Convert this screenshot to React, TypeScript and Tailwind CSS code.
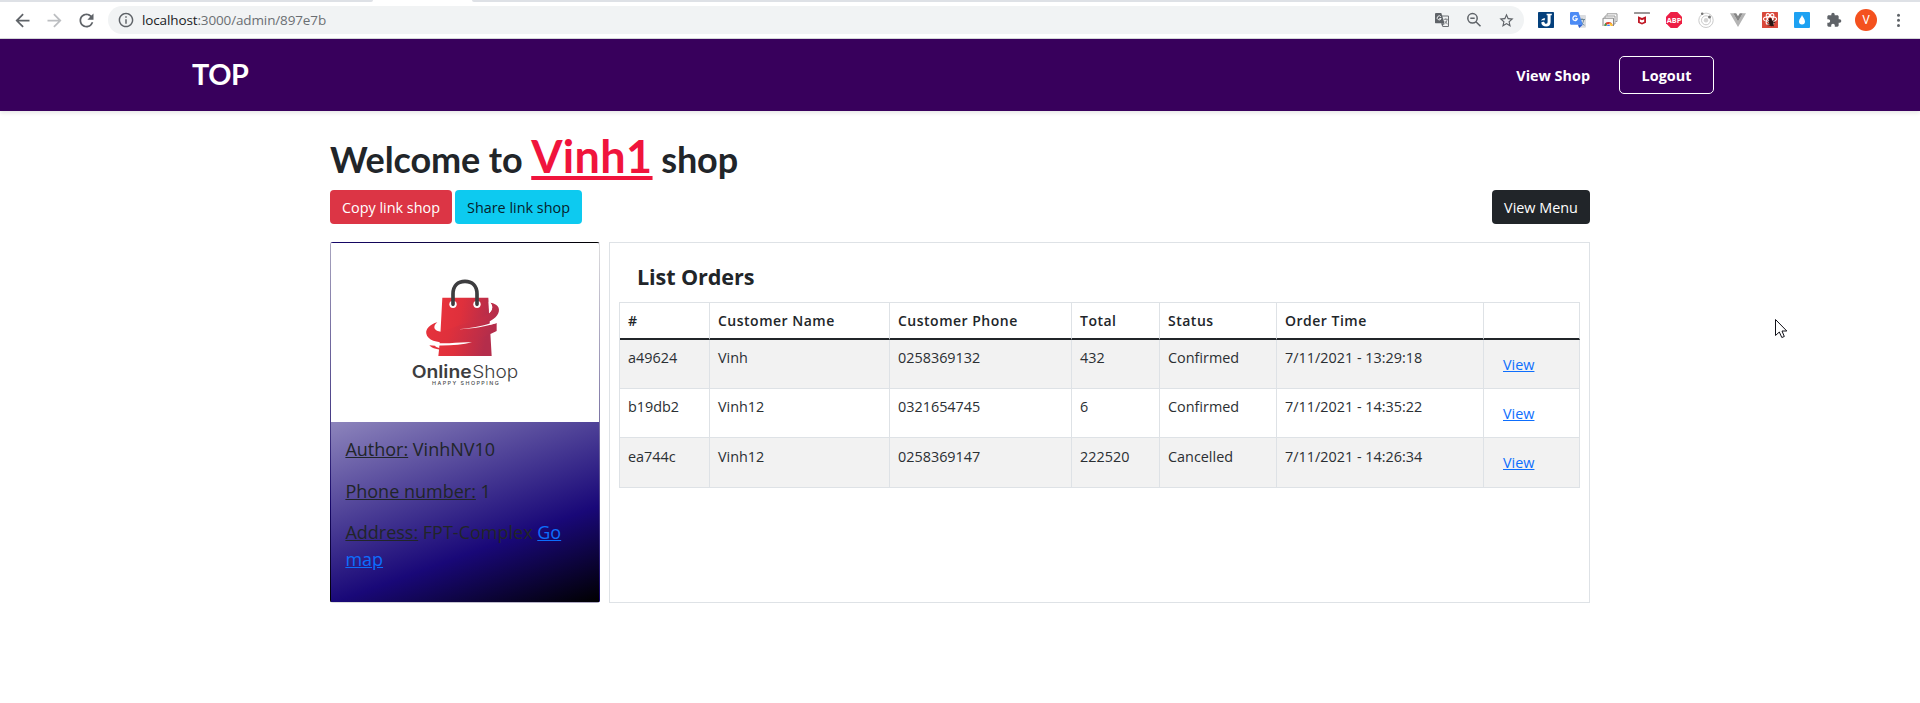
import React from 'react';

type Order = {
  id: string;
  name: string;
  phone: string;
  total: string;
  status: string;
  time: string;
};

const orders: Order[] = [
  { id: 'a49624', name: 'Vinh', phone: '0258369132', total: '432', status: 'Confirmed', time: '7/11/2021 - 13:29:18' },
  { id: 'b19db2', name: 'Vinh12', phone: '0321654745', total: '6', status: 'Confirmed', time: '7/11/2021 - 14:35:22' },
  { id: 'ea744c', name: 'Vinh12', phone: '0258369147', total: '222520', status: 'Cancelled', time: '7/11/2021 - 14:26:34' },
];

const headers = ['#', 'Customer Name', 'Customer Phone', 'Total', 'Status', 'Order Time', ''];

function Slot({ children }: { children: React.ReactNode }) {
  return <span className="flex h-7 w-8 shrink-0 items-center justify-center">{children}</span>;
}

function Mat({ d, className }: { d: string; className: string }) {
  return (
    <svg viewBox="0 0 24 24" className={className} fill="currentColor">
      <path d={d} />
    </svg>
  );
}

function Extensions() {
  return (
    <div className="flex">
      <Slot>
        <svg viewBox="0 0 16 16" className="size-4">
          <rect width="16" height="16" rx=".8" fill="#04407c" />
          <path d="M8.600 1.800h5.200v1.500h-1.200v7c0 2.800-1.700 4.200-4.400 4.200-2.700 0-4.800-1.300-5-3.900 1.200-.9 2.200-.9 3.200-.6 0 1 .6 1.800 1.700 1.800 1.100 0 1.500-.7 1.500-2.200V3.300h-1z" fill="#fff" />
          <path d="M3 8.800c.8-2 2.300-2.900 4.200-2.400L6.400 8.500C5.200 8.200 4.200 8.300 3 8.800z" fill="#fff" />
        </svg>
      </Slot>
      <Slot>
        <svg viewBox="0 0 16 16" className="size-4">
          <path d="M6 3h9.200l.8.800V15l-.8.800H9z" fill="#dadce0" />
          <path d="M9.500 7.500h5.500M12 6.300v1.200M10.500 13c2-1.200 3-3 3.300-5.300M10.800 9.500c.7 1.500 2 2.800 3.700 3.700" stroke="#6d8796" fill="none" strokeWidth="1" />
          <path d="M.8 0h7.700l4.300 12.800H.8L0 12V.8z" fill="#4c8bf5" />
          <path d="m8 12.800 4.800 0L9.200 16z" fill="#2e62d3" />
          <path d="M6.900 4.700a2.300 2.300 0 1 0 .5 2.200H5.200" fill="none" stroke="#fff" strokeWidth="1.200" />
        </svg>
      </Slot>
      <Slot>
        <svg viewBox="0 0 16 16" className="size-4">
          <path d="M5 3.500V1.800h10v7.700h-1.500M3 6V4h10v8h-1.500" fill="#fff" stroke="#999" />
          <path d="M1 14V6.200h10.500V14" fill="#fafafa" stroke="#888" />
          <path d="M2.400 14a4.100 4.100 0 1 1 8.200 0z" fill="#e2402f" />
          <path d="M2.400 14c0-1.400.4-2.300 1.100-3L5.200 14z" fill="#35a350" />
          <path d="M10.600 14c0-1.200-.3-2-.9-2.800H7L8 14z" fill="#fcc934" />
          <path d="M4.500 14a2 2 0 0 1 4 0z" fill="#fff" />
          <path d="M5 14a1.500 1.500 0 0 1 3 0z" fill="#4285f4" />
        </svg>
      </Slot>
      <Slot>
        <svg viewBox="0 0 16 16" className="size-4">
          <rect y="0" width="16" height="2" rx=".5" fill="#9b9797" />
          <path d="M4 4.200 8 6l4-1.800v6.600L8 12.600l-4-1.800z" fill="#c01825" />
          <path d="M5.800 7.200 8 8.300l2.200-1.100v2.500L8 10.800 5.800 9.700z" fill="#fff" />
        </svg>
      </Slot>
      <Slot>
        <svg viewBox="0 0 16 16" className="size-4">
          <path d="M4.700 0h6.600L16 4.700v6.600L11.300 16H4.700L0 11.300V4.700z" fill="#ed1e45" />
          <text x=".7" y="10.800" fontSize="7.600" fontWeight="700" fill="#fff" fontFamily="Open Sans, sans-serif" textLength="14.600" lengthAdjust="spacingAndGlyphs">ABP</text>
        </svg>
      </Slot>
      <Slot>
        <svg viewBox="0 0 16 16" className="size-4" fill="none" stroke="#c4c4c4">
          <circle cx="8" cy="8.300" r="7.200" strokeWidth=".9" />
          <circle cx="8" cy="8.300" r="4.500" strokeWidth=".9" />
          <circle cx="8" cy="8.300" r="2.200" fill="#d4d4d4" stroke="none" />
          <circle cx="4.200" cy="1.700" r="1.300" fill="#777" stroke="none" />
          <circle cx="11.500" cy="5" r="1.500" fill="#777" stroke="none" />
        </svg>
      </Slot>
      <Slot>
        <svg viewBox="0 0 16 16" className="size-4">
          <path d="M0 1.200h3.200L8 9.500l4.800-8.300H16L8 15z" fill="#b4b4b4" />
          <path d="M3.200 1.200h3L8 4.300l1.800-3.100h3L8 9.500z" fill="#858585" />
        </svg>
      </Slot>
      <Slot>
        <svg viewBox="0 0 16 16" className="size-4">
          <rect width="16" height="16" rx=".6" fill="#d9483b" />
          <g fill="none" stroke="#fff" strokeWidth="1.100">
            <ellipse cx="8" cy="7" rx="6.600" ry="2.400" />
            <ellipse cx="8" cy="7" rx="6" ry="2.400" transform="rotate(60 8 7)" />
            <ellipse cx="8" cy="7" rx="6" ry="2.400" transform="rotate(-60 8 7)" />
          </g>
          <ellipse cx="9.300" cy="11" rx="2.200" ry="3.300" fill="#2a1512" transform="rotate(-15 9.300 11)" />
          <circle cx="8.300" cy="7.500" r="1.500" fill="#2a1512" />
          <path d="m5.500 8.800 3 1.500-3 2.500M12.500 8 10 9.800l3.200.8M6.500 14.200l2-2 3.500 1.800" stroke="#2a1512" strokeWidth=".9" fill="none" />
        </svg>
      </Slot>
      <Slot>
        <svg viewBox="0 0 16 16" className="size-4">
          <rect width="16" height="16" rx="1" fill="#1da1f2" />
          <path d="M8 3c.6 2.200 3 3.900 3 6.500a3 3 0 0 1-6 0C5 7.200 7.300 5.500 8 3z" fill="#fff" />
        </svg>
      </Slot>
      <Slot>
        <Mat className="size-4 text-[#5f6368]" d="M20.500 11H19V7c0-1.100-.9-2-2-2h-4V3.500a2.500 2.500 0 0 0-5 0V5H4c-1.100 0-1.990.9-1.990 2v3.800H3.500c1.490 0 2.700 1.210 2.700 2.700s-1.210 2.700-2.700 2.700H2V20c0 1.100.9 2 2 2h3.800v-1.500c0-1.490 1.210-2.700 2.700-2.700s2.700 1.210 2.700 2.700V22H17c1.100 0 2-.9 2-2v-4h1.500a2.500 2.500 0 0 0 0-5z" />
      </Slot>
      <Slot>
        <span className="flex size-[22px] items-center justify-center rounded-full bg-[#f4511e] font-['Roboto',sans-serif] text-[12px] text-white">V</span>
      </Slot>
      <Slot>
        <svg viewBox="0 0 16 16" className="size-4" fill="#5f6368">
          <circle cx="8.500" cy="3.200" r="1.500" />
          <circle cx="8.500" cy="8.300" r="1.500" />
          <circle cx="8.500" cy="13.400" r="1.500" />
        </svg>
      </Slot>
    </div>
  );
}

function BrowserBar() {
  return (
    <div className="h-[39px] border-b border-[#d6d8da] bg-white">
      <div className="flex h-[2px] justify-between">
        <div className="w-[373px] rounded-br-[3px] bg-[#dee1e6]" />
        <div className="w-[1448px] rounded-bl-[3px] bg-[#dee1e6]" />
      </div>
      <div className="flex h-9 items-center pr-1.5 pl-1.5">
        <Slot>
          <Mat className="size-[21px] text-[#5f6368]" d="M20 11H7.830l5.590-5.590L12 4l-8 8 8 8 1.410-1.410L7.830 13H20v-2z" />
        </Slot>
        <Slot>
          <Mat className="size-[21px] text-[#bcbec1]" d="m12 4-1.410 1.410L16.170 11H4v2h12.170l-5.580 5.590L12 20l8-8z" />
        </Slot>
        <Slot>
          <Mat className="size-[21px] text-[#5f6368]" d="M17.650 6.350A7.958 7.958 0 0 0 12 4c-4.420 0-7.990 3.580-7.990 8s3.570 8 7.990 8c3.730 0 6.840-2.550 7.730-6h-2.080A5.990 5.990 0 0 1 12 18c-3.310 0-6-2.690-6-6s2.690-6 6-6c1.660 0 3.140.69 4.220 1.780L13 11h7V4l-2.350 2.350z" />
        </Slot>
        <div className="ml-1.5 flex h-7 flex-1 items-center rounded-full bg-[#f1f3f4] pr-0.5 pl-2.5">
          <Mat className="size-4 scale-110 text-[#5f6368]" d="M11 7h2v2h-2zm0 4h2v6h-2zm1-9C6.480 2 2 6.480 2 12s4.480 10 10 10 10-4.480 10-10S17.520 2 12 2zm0 18c-4.410 0-8-3.590-8-8s3.590-8 8-8 8 3.590 8 8-3.590 8-8 8z" />
          <span className="ml-2 flex-1 font-['Open_Sans',sans-serif] text-[13.500px] leading-5 tracking-[-.13px] text-[#6b6f73]">
            <span className="text-[#202124]">localhost</span>:3000/admin/897e7b
          </span>
          <Slot>
            <svg viewBox="0 0 16 16" className="size-4">
              <path d="M6.500 4h8v10.500H8.500" fill="none" stroke="#6d7074" />
              <path d="M1.500 1h5.800l3.200 10.300H1.500L1 10.800V1.500z" fill="#5f6368" />
              <path d="M7 11.300h3.500L8.300 14.500z" fill="#5f6368" />
              <path d="M6.800 4.700a2 2 0 1 0 .3 1.800H5.300" fill="none" stroke="#f1f3f4" />
              <path d="M9.800 7.300h4M11.800 6.300v1M10.500 12c1.500-1 2.300-2.600 2.600-4.500M10.800 9c.6 1.300 1.500 2.300 2.800 3" fill="none" stroke="#6d7074" strokeWidth=".8" />
            </svg>
          </Slot>
          <Slot>
            <svg viewBox="0 0 16 16" className="size-4" fill="none" stroke="#5f6368" strokeWidth="1.500">
              <circle cx="6.500" cy="6.300" r="4.700" />
              <path d="m9.900 9.700 4.600 4.600M4.300 6.300h4.400" />
            </svg>
          </Slot>
          <Slot>
            <Mat className="size-[17px] text-[#5f6368]" d="m22 9.240-7.190-.62L12 2 9.190 8.630 2 9.240l5.460 4.730L5.820 21 12 17.270 18.180 21l-1.630-7.030L22 9.240zM12 15.400l-3.760 2.270 1-4.280-3.320-2.880 4.380-.38L12 6.100l1.710 4.040 4.380.38-3.320 2.880 1 4.280L12 15.400z" />
          </Slot>
        </div>
        <div className="ml-1.5">
          <Extensions />
        </div>
      </div>
    </div>
  );
}

function ShopLogo() {
  return (
    <svg viewBox="33 24 804 537" className="block h-[179px] w-[268px] bg-white">
      <defs>
        <linearGradient id="bag" x1="0" x2="1" y1="0" y2=".2">
          <stop offset="0" stopColor="#e9333c" />
          <stop offset=".45" stopColor="#df303c" />
          <stop offset="1" stopColor="#b42d4b" />
        </linearGradient>
      </defs>
      <path d="M367 188H505L515 363H355L357 345 361 300Z" fill="url(#bag)" />
      <path d="M352 262C330 268 316 282 319 296C323 316 352 324 392 323C440 322 490 308 530 288V264C500 273 470 279 440 282C470 276 500 266 520 252C540 238 542 218 528 209C522 205 516 203 511 203C520 213 518 224 508 234C492 248 460 260 420 270L362 290C346 290 334 276 352 262Z" fill="url(#bag)" />
      <path d="M508 200C520 212 519 224 507 235L506 200Z" fill="#fff" />
      <path d="M414 283C460 281 500 274 530 264L528 259C500 270 460 280 414 283Z" fill="#fff" />
      <path d="M326 330C370 334 420 331 456 322C430 320 400 324 370 325C340 324 326 318 316 306L318 331Z" fill="#fff" />
      <path d="M328 331C338 341 352 345 380 345C368 340 350 340 345 332Z" fill="#e5333d" />
      <circle cx="399" cy="208" r="11" fill="#fff" />
      <circle cx="471" cy="208" r="11" fill="#fff" />
      <path d="M399 208V177C399 152 414 139 435 139C456 139 471 152 471 177V208" fill="none" stroke="#3d3d3f" strokeWidth="11" strokeLinecap="round" />
      <text x="275" y="430" fontFamily="Inter, sans-serif" fontSize="53" fontWeight="600" fill="#3d3d3f" textLength="180" lengthAdjust="spacingAndGlyphs">Online</text>
      <text x="457" y="430" fontFamily="Inter, sans-serif" fontSize="53" fontWeight="300" fill="#3d3d3f" textLength="138" lengthAdjust="spacingAndGlyphs">Shop</text>
      <text x="336" y="451" fontFamily="Inter, sans-serif" fontSize="16" fontWeight="500" fill="#4a4a4c" textLength="200">HAPPY SHOPPING</text>
    </svg>
  );
}

function ShopCard() {
  return (
    <aside className="h-[361px] w-[270px] overflow-hidden rounded-[3px] border border-black/[.125] bg-[linear-gradient(160deg,#ffffff_0%,#190878_79%,#000000_100%)]">
      <ShopLogo />
      <div className="flex flex-col gap-[14.400px] px-[14.400px] pt-[14.400px] text-[18px] leading-[27px]">
        <p><u>Author:</u> VinhNV10</p>
        <p><u>Phone number:</u> 1</p>
        <p><u>Address:</u> FPT-Complex <a className="text-[#0d6efd] underline">Go map</a></p>
      </div>
    </aside>
  );
}

function OrdersPanel() {
  return (
    <section className="h-[361px] w-[981px] border border-[#dee2e6] px-[9px] pt-[20px]">
      <h2 className="mb-[11px] pl-[18px] text-[21.600px] leading-7 font-bold tracking-[-.1px]">List Orders</h2>
      <table className="w-[961px] table-fixed border-separate border-spacing-0 border-t border-l border-[#dee2e6] text-left text-[14.400px] leading-[21.600px]">
        <colgroup>
          <col className="w-[90px]" />
          <col className="w-[180px]" />
          <col className="w-[182px]" />
          <col className="w-[88px]" />
          <col className="w-[117px]" />
          <col className="w-[207px]" />
          <col className="w-[96px]" />
        </colgroup>
        <thead>
          <tr className="h-[37px]">
            {headers.map((h, i) => (
              <th key={i} className="border-r border-b-2 border-r-[#dee2e6] border-b-[#212529] py-0 pr-0 pl-2 text-[14px] font-semibold tracking-[.5px]">{h}</th>
            ))}
          </tr>
        </thead>
        <tbody className="text-[#2b2f33]">
          {orders.map((o) => (
            <tr key={o.id} className="group h-[49px] align-top odd:bg-[#f2f2f2] last:h-[50px]">
              {[o.id, o.name, o.phone, o.total, o.status, o.time].map((v, i) => (
                <td key={i} className="border-r border-b border-[#dee2e6] pt-[7px] pl-2 group-last:pt-2">{v}</td>
              ))}
              <td className="border-r border-b border-[#dee2e6] pt-[14px] pl-[19px]">
                <a className="text-[#0d6efd] underline">View</a>
              </td>
            </tr>
          ))}
        </tbody>
      </table>
    </section>
  );
}

export default function App() {
  return (
    <div className="relative h-[703px] w-[1920px] overflow-hidden bg-white font-['Open_Sans',sans-serif] text-[14.400px] text-[#212529]">
      <BrowserBar />
      <nav className="flex h-[72px] items-center justify-between bg-[#38005c] pr-[206px] pl-[192px] text-white shadow-[0_2px_4px_rgba(0,0,0,.1)]">
        <a className="font-['Lato',sans-serif] text-[28.800px] font-bold tracking-[-.4px]">TOP</a>
        <div className="flex items-center gap-[29px] text-[14.400px] font-bold">
          <a className="pt-0.5">View Shop</a>
          <button className="h-[38px] w-[95px] rounded-[5px] border border-white pt-0.5 font-bold">Logout</button>
        </div>
      </nav>
      <main className="mx-auto w-[1260px] pt-[14px]">
        <h1 className="h-[65px] font-['Lato',sans-serif] text-[36px] leading-[63px] font-bold tracking-[-.1px]">
          Welcome to <span className="text-[45px] tracking-[.35px] text-[#f0143c] underline">Vinh1</span> shop
        </h1>
        <div className="flex h-[34px] gap-[3px]">
          <button className="w-[122px] rounded-[4px] bg-[#dc3545] pt-0.5 text-white">Copy link shop</button>
          <button className="w-[127px] rounded-[4px] bg-[#0dcaf0] pt-0.5 text-[#06222b]">Share link shop</button>
          <button className="ml-auto w-[98px] rounded-[4px] bg-[#212529] pt-0.5 text-white">View Menu</button>
        </div>
        <div className="mt-[18px] flex justify-between">
          <ShopCard />
          <OrdersPanel />
        </div>
      </main>
      <svg viewBox="0 0 14 21" className="absolute top-[318px] left-[1774px] h-[21px] w-[14px]">
        <path d="M1.500 1.500V17.500L5.300 14 7.800 19.500 10.300 18.500 8 13H12.800Z" fill="#fff" stroke="#101018" strokeWidth="1" />
      </svg>
    </div>
  );
}
